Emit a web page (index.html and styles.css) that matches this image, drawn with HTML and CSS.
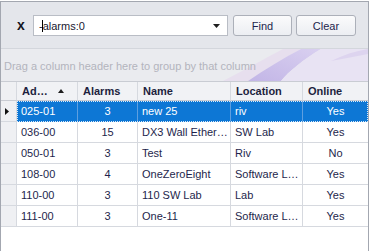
FILE: index.html
```html
<!DOCTYPE html>
<html>
<head>
<meta charset="utf-8">
<link rel="stylesheet" href="styles.css">
</head>
<body>
<div class="grid">
  <div class="find-panel">
    <span class="close">x</span>
    <div class="search">
      <span class="search-text">-alarms:0</span>
      <span class="caret"></span>
      <svg class="dd" width="7" height="4" viewBox="0 0 7 4"><path d="M0 0 L7 0 L3.5 4 Z" fill="#1e1e1e"/></svg>
    </div>
    <button class="btn btn-find">Find</button>
    <button class="btn btn-clear">Clear</button>
  </div>
  <div class="group-panel">
    <svg class="swoosh" width="367" height="32" viewBox="0 0 367 32">
      <defs>
        <linearGradient id="g1" x1="0" y1="1" x2="1" y2="0">
          <stop offset="0" stop-color="#c2b5e6"/>
          <stop offset="1" stop-color="#d9d0f0"/>
        </linearGradient>
      </defs>
      <path d="M222 32 C245 20 265 9 282 0 L300 0 C282 10 262 22 247 32 Z" fill="#e7dfee"/>
      <path d="M247 32 C264 20 283 9 300 0 L320 0 C302 11 288 22 280 32 Z" fill="url(#g1)"/>
      <path d="M280 32 C288 22 302 11 320 0 L367 0 L367 32 Z" fill="#e8e3f3"/>
      <path d="M330 12 C342 6 354 2 367 0 L367 5 C355 7 343 10 330 12 Z" fill="#ddd4ef"/>
    </svg>
    <span class="group-text">Drag a column header here to group by that column</span>
  </div>
  <div class="row header">
    <div class="cell ind"></div>
    <div class="cell hcell sorted"><span>Ad…</span><svg class="sort" width="6" height="4" viewBox="0 0 6 4"><path d="M0 4 L6 4 L3 0 Z" fill="#1e1e1e"/></svg></div>
    <div class="cell hcell">Alarms</div>
    <div class="cell hcell">Name</div>
    <div class="cell hcell">Location</div>
    <div class="cell hcell last">Online</div>
  </div>
  <div class="row selected">
    <div class="cell ind"><svg width="4" height="7" viewBox="0 0 4 7"><path d="M0 0 L4 3.5 L0 7 Z" fill="#111"/></svg></div>
    <div class="cell">025-01</div>
    <div class="cell center">3</div>
    <div class="cell">new 25</div>
    <div class="cell">riv</div>
    <div class="cell center last">Yes</div>
  </div>
  <div class="row">
    <div class="cell ind"></div>
    <div class="cell">036-00</div>
    <div class="cell center">15</div>
    <div class="cell">DX3 Wall Ether…</div>
    <div class="cell">SW Lab</div>
    <div class="cell center last">Yes</div>
  </div>
  <div class="row">
    <div class="cell ind"></div>
    <div class="cell">050-01</div>
    <div class="cell center">3</div>
    <div class="cell">Test</div>
    <div class="cell">Riv</div>
    <div class="cell center last">No</div>
  </div>
  <div class="row">
    <div class="cell ind"></div>
    <div class="cell">108-00</div>
    <div class="cell center">4</div>
    <div class="cell">OneZeroEight</div>
    <div class="cell">Software L…</div>
    <div class="cell center last">Yes</div>
  </div>
  <div class="row">
    <div class="cell ind"></div>
    <div class="cell">110-00</div>
    <div class="cell center">3</div>
    <div class="cell">110 SW Lab</div>
    <div class="cell">Lab</div>
    <div class="cell center last">Yes</div>
  </div>
  <div class="row">
    <div class="cell ind"></div>
    <div class="cell">111-00</div>
    <div class="cell center">3</div>
    <div class="cell">One-11</div>
    <div class="cell">Software L…</div>
    <div class="cell center last">Yes</div>
  </div>
</div>
</body>
</html>
```

FILE: styles.css
```css
html, body {
  margin: 0;
  padding: 0;
  background: #ffffff;
}
body {
  font-family: "Liberation Sans", Arial, sans-serif;
  font-size: 11px;
  color: #1e1f4c;
}
.grid {
  box-sizing: border-box;
  width: 369px;
  height: 260px;
  margin-top: 1px;
  border: 1px solid #a3a7b0;
  background: #ffffff;
}
.find-panel {
  box-sizing: border-box;
  height: 47px;
  display: flex;
  align-items: flex-start;
  padding: 13px 0 0 16px;
  background: #e4e6eb;
  border-bottom: 1px solid #d3d6dc;
}
.close {
  width: 17px;
  height: 21px;
  line-height: 21px;
  font-weight: bold;
  font-size: 14px;
  color: #14141f;
}
.search {
  position: relative;
  box-sizing: border-box;
  width: 195px;
  height: 21px;
  margin-left: -1px;
  background: #ffffff;
  border: 1px solid #b9bdc5;
  display: flex;
  align-items: center;
}
.search-text {
  padding-left: 5px;
  color: #202030;
}
.caret {
  position: absolute;
  left: 8px;
  top: 4px;
  width: 1px;
  height: 12px;
  background: #000000;
}
.dd {
  position: absolute;
  right: 7px;
  top: 8px;
}
.btn {
  box-sizing: border-box;
  height: 21px;
  padding: 0;
  margin: 0 0 0 5px;
  font-family: inherit;
  font-size: 11px;
  color: #1e1f4c;
  border: 1px solid #acb0b9;
  border-radius: 3px;
  background: linear-gradient(#fbfbfc, #eceef2);
}
.btn-find {
  width: 59px;
}
.btn-clear {
  width: 60px;
  margin-left: 4px;
}
.group-panel {
  position: relative;
  box-sizing: border-box;
  height: 33px;
  background: #eaebef;
  border-bottom: 1px solid #c9ccd3;
  display: flex;
  align-items: center;
  overflow: hidden;
}
.swoosh {
  position: absolute;
  left: 0;
  top: 0;
}
.group-text {
  position: relative;
  padding: 2px 0 0 3px;
  color: #b3b4bd;
}
.row {
  display: grid;
  grid-template-columns: 16px 61px 60px 93px 72px 65px;
  height: 21px;
  box-sizing: border-box;
}
.cell {
  box-sizing: border-box;
  border-right: 1px solid #d6d9df;
  border-bottom: 1px solid #d6d9df;
  padding-left: 4px;
  display: flex;
  align-items: center;
  white-space: nowrap;
  overflow: hidden;
}
.cell.last {
  border-right: none;
}
.cell.center {
  justify-content: center;
  padding-left: 0;
}
.cell.ind {
  background: #eff0f3;
  padding-left: 4px;
}
.header {
  height: 19px;
  background: #f1f2f5;
}
.header .cell {
  border-bottom-color: #c9ccd3;
}
.hcell {
  font-weight: bold;
  color: #1d1f3e;
  padding-left: 5px;
}
.sort {
  margin-left: 10px;
}
.selected .cell:not(.ind) {
  background: #0d77d5;
  color: #ffffff;
  border-right-color: #5e9fe0;
  border-bottom-color: #0d77d5;
}
.selected {
  position: relative;
}
.selected::after {
  content: "";
  position: absolute;
  left: 16px;
  right: 0;
  top: 0;
  bottom: 0;
  border: 1px dotted rgba(255, 255, 255, 0.85);
  pointer-events: none;
}
```
